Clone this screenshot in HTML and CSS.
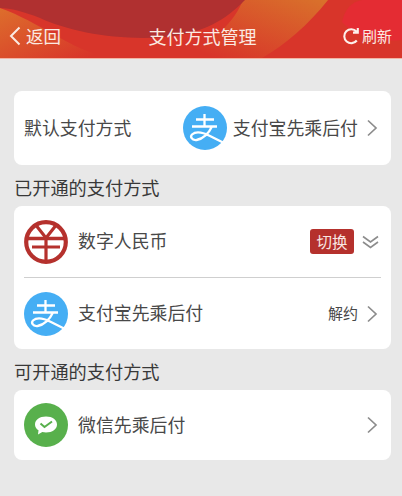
FILE: index.html
```html
<!DOCTYPE html>
<html lang="zh-CN">
<head>
<meta charset="utf-8">
<title>支付方式管理</title>
<link rel="stylesheet" href="styles.css">
</head>
<body>
<svg width="0" height="0" class="defs">
  <defs>
    <symbol id="alipay" viewBox="0 0 44 44">
      <circle cx="22" cy="22" r="22" fill="#45aef4"/>
      <path d="M13 13.500H31M21.500 8V20M9 20.500H34M29 20.500C26 27 20 33 13.500 34C8.500 34.500 7 30.500 9 28.500C13 25 21 27 27 30C31 32 36 34.500 41 37" fill="none" stroke="#fff" stroke-width="2.300"/>
    </symbol>
    <symbol id="chev" viewBox="0 0 12 18">
      <path d="M2 1.500L10 9L2 16.500" fill="none" stroke="#8c8c8c" stroke-width="1.700"/>
    </symbol>
  </defs>
</svg>
<header class="topbar">
  <svg class="topbar-bg" viewBox="0 0 402 58" preserveAspectRatio="none" aria-hidden="true">
    <defs>
      <linearGradient id="band" x1="0" x2="1" y1="1" y2="0">
        <stop offset="0.150" stop-color="#d8352a"/>
        <stop offset="1" stop-color="#d9722b"/>
      </linearGradient>
      <linearGradient id="left" x1="0" x2="1" y1="0" y2="1">
        <stop offset="0" stop-color="#dd6e2c"/>
        <stop offset="0.900" stop-color="#d8352a"/>
      </linearGradient>
    </defs>
    <rect width="402" height="58" fill="#d8352a"/>
    <path d="M0 8C40 22 70 50 110 58H0Z" fill="url(#left)"/>
    <path d="M243 0H328C308 25 285 45 262 58H170C215 45 235 20 243 0Z" fill="url(#band)"/>
    <path d="M342 22C345 8 352 2 362 0H402V40C385 42 358 40 342 22Z" fill="#e42c33"/>
    <path d="M0 0H245C225 20 205 33 165 37C120 41 70 32 40 18C25 12 10 8 0 8Z" fill="#b03030"/>
  </svg>
  <div class="back">
    <svg class="back-icon" viewBox="0 0 12 20"><path d="M10.500 1.500L2 10L10.500 18.500" fill="none" stroke="#fbeae2" stroke-width="2"/></svg>
    <span>返回</span>
  </div>
  <h1 class="title">支付方式管理</h1>
  <div class="refresh">
    <svg class="refresh-icon" viewBox="0 0 18 18"><path d="M14.800 13.500A7 7 0 1 1 14.500 4.500M15.800 1V5.600H11" fill="none" stroke="#fdf0ea" stroke-width="2.100"/></svg>
    <span>刷新</span>
  </div>
</header>
<main class="content">
  <section class="card card-default">
    <span class="label">默认支付方式</span>
    <div class="default-value">
      <svg class="logo"><use href="#alipay"/></svg>
      <span class="label">支付宝先乘后付</span>
      <svg class="chev"><use href="#chev"/></svg>
    </div>
  </section>
  <h2 class="section-title">已开通的支付方式</h2>
  <section class="card">
    <div class="row">
      <svg class="logo" viewBox="0 0 44 44">
        <circle cx="22" cy="22" r="19.800" fill="none" stroke="#b5312d" stroke-width="4.200"/>
        <path d="M3 18.500H41" stroke="#b5312d" stroke-width="3.400"/>
        <path d="M8 27H36" stroke="#b5312d" stroke-width="3"/>
        <path d="M11 4L22 18L33 4M22 18V41" fill="none" stroke="#b5312d" stroke-width="3.200"/>
      </svg>
      <span class="name">数字人民币</span>
      <span class="badge">切换</span>
      <svg class="double" viewBox="0 0 17 14"><path d="M1 1.500L8.500 7L16 1.500M1 7L8.500 12.500L16 7" fill="none" stroke="#8c8c8c" stroke-width="1.600"/></svg>
    </div>
    <div class="divider"></div>
    <div class="row">
      <svg class="logo"><use href="#alipay"/></svg>
      <span class="name">支付宝先乘后付</span>
      <span class="action">解约</span>
      <svg class="chev"><use href="#chev"/></svg>
    </div>
  </section>
  <h2 class="section-title">可开通的支付方式</h2>
  <section class="card">
    <div class="row row-single">
      <svg class="logo" viewBox="0 0 44 44">
        <circle cx="22" cy="22" r="22" fill="#58b04c"/>
        <path d="M22 13.500C15.500 13.500 11 17 11 21.500C11 24 12.300 26 14.500 27.300L14 31.500L18.300 29C19.500 29.300 20.700 29.500 22 29.500C28.500 29.500 33 26 33 21.500C33 17 28.500 13.500 22 13.500Z" fill="#fff"/>
        <path d="M16.500 20.500L20.500 24L28 18.500" fill="none" stroke="#58b04c" stroke-width="2"/>
      </svg>
      <span class="name">微信先乘后付</span>
      <svg class="chev"><use href="#chev"/></svg>
    </div>
  </section>
</main>
</body>
</html>
```
FILE: styles.css
```css
* { box-sizing: border-box; }
html, body { margin: 0; padding: 0; }
body {
  width: 402px;
  height: 496px;
  overflow: hidden;
  background: #e8e8e8;
  color: #484848;
  font-family: "Noto Sans CJK SC", "Noto Sans", sans-serif;
}
.defs { position: absolute; }
.topbar {
  position: relative;
  height: 59px;
  display: flex;
  align-items: center;
  justify-content: space-between;
  padding: 13px 10px 0 9px;
  border-bottom: 1px solid #f2b5a5;
  color: #fbeae2;
  overflow: hidden;
}
.topbar-bg { position: absolute; inset: 0; width: 100%; height: 58px; }
.back, .refresh, .title { position: relative; display: flex; align-items: center; }
.back { font-size: 17.500px; gap: 5px; width: 124px; }
.back-icon { width: 12px; height: 20px; }
.title { margin: 0; font-size: 18px; font-weight: 400; }
.refresh { font-size: 15px; gap: 2px; width: 120px; justify-content: flex-end; }
.refresh-icon { width: 18px; height: 18px; }
.content { padding: 32px 11px 0 14px; }
.card { background: #fff; border-radius: 8px; }
.card-default {
  height: 74px;
  display: flex;
  align-items: center;
  justify-content: space-between;
  padding: 0 13px 0 10px;
}
.label { font-size: 17.900px; white-space: nowrap; padding-bottom: 3px; }
.default-value { display: flex; align-items: center; gap: 6px; }
.logo { width: 44px; height: 44px; flex: none; }
.chev { width: 12px; height: 18px; flex: none; }
.default-value .chev { margin-left: 2px; }
.section-title {
  margin: 0;
  height: 41px;
  padding-top: 10px;
  line-height: 25px;
  font-size: 18.200px;
  font-weight: 400;
  color: #383838;
}
.row {
  height: 71px;
  display: flex;
  align-items: center;
  padding: 0 13px 0 10px;
}
.row-single { height: 70px; }
.name { font-size: 17.900px; margin-left: 10px; flex: 1; white-space: nowrap; padding-bottom: 3px; }
.divider { height: 1px; margin: 0 10px; background: #cfcfcf; }
.badge {
  background: #b5312d;
  color: #f8e6e2;
  border-radius: 3px;
  font-size: 15.500px;
  line-height: 25px;
  width: 44px;
  text-align: center;
}
.double { width: 17px; height: 14px; margin-left: 8px; margin-right: -1px; flex: none; }
.action { font-size: 15px; margin-right: 8px; padding-bottom: 2px; }
```
